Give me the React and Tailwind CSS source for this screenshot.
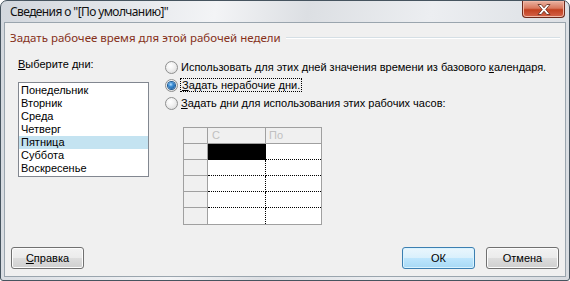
import React from "react";

const days = ["Понедельник", "Вторник", "Среда", "Четверг", "Пятница", "Суббота", "Воскресенье"];

function Radio({ checked }) {
  return (
    <span className="relative flex h-[13px] w-[13px] shrink-0 items-center justify-center rounded-full border border-[#8e8f8f] bg-[radial-gradient(circle_at_40%_35%,#ffffff_0%,#f2f2f2_40%,#d4d4d4_100%)]">
      {checked && (
        <span className="h-[7px] w-[7px] rounded-full bg-[radial-gradient(circle_at_40%_35%,#b6e0ff_0%,#3d8fd6_35%,#0f4a8a_100%)] shadow-[0_0_0_1px_#1d5a94]" />
      )}
    </span>
  );
}

function Btn({ children, primary, className = "" }) {
  return (
    <div
      className={
        "flex h-[22px] w-[73px] items-center justify-center rounded-[3px] border text-[11px] text-black " +
        (primary
          ? "border-[#3c7fb1] bg-[linear-gradient(#eaf6fd_0%,#d9f0fc_50%,#bee6fd_50%,#a7d9f5_100%)] shadow-[inset_0_0_0_1px_#d9f3ff] "
          : "border-[#707070] bg-[linear-gradient(#f2f2f2_0%,#ebebeb_50%,#dddddd_50%,#cfcfcf_100%)] shadow-[inset_0_0_0_1px_#fcfcfc] ") +
        className
      }
    >
      {children}
    </div>
  );
}

export default function App() {
  const rows = [0, 1, 2, 3, 4];
  return (
    <div className="h-[281px] w-[570px] overflow-hidden bg-white font-['Liberation_Sans',Arial,sans-serif]">
      <div className="flex h-[281px] w-[570px] flex-col rounded-t-[7px] rounded-b-[3px] border border-[#46545f] bg-[linear-gradient(100deg,#d2d7dd_0%,#e4e7eb_20%,#f3f4f6_35%,#dcdfe3_50%,#eceef1_70%,#d7dbe0_100%)]">
        {/* Title bar */}
        <div className="flex h-[21px] shrink-0 items-start justify-between">
          <div className="pl-[9px] pt-[3px] font-['Noto_Sans',sans-serif] text-[12px] leading-[16px] tracking-[-0.6px] text-[#111]">
            Сведения о "[По умолчанию]"
          </div>
          <div className="mr-[4px] flex h-[17px] w-[43px] items-center justify-center rounded-b-[4px] border border-t-0 border-[#6e2a1c] bg-[linear-gradient(#eab3a2_0%,#d9785d_45%,#c2401f_55%,#d4634a_100%)] shadow-[inset_0_0_0_1px_#f2b8a6]">
            <svg width="14" height="11" viewBox="0 0 14 11">
              <path d="M1 0.5h3.2L7 3.8 9.8 0.5H13L8.8 5.5 13 10.5H9.8L7 7.2 4.2 10.5H1L5.2 5.5z" fill="#fff" stroke="#5a2418" strokeWidth="0.8" />
            </svg>
          </div>
        </div>
        {/* Client */}
        <div className="mx-[3px] mb-[3px] flex flex-1 flex-col border border-[#9aa5ae] bg-[#f0f0f0]">
          {/* Group header */}
          <div className="mt-[7px] flex h-[15px] items-center pl-[5px] pr-[5px]">
            <span className="font-['Noto_Sans',sans-serif] text-[11.5px] leading-[15px] text-[#86301a]">
              Задать рабочее время для этой рабочей недели
            </span>
            <div className="ml-[5px] h-[2px] flex-1 border-t border-b border-t-[#d5dfe5] border-b-white" />
          </div>
          {/* Main */}
          <div className="mt-[13px] flex text-[11px] text-black">
            <div className="ml-[13px] flex w-[131px] flex-col">
              <div className="h-[13px] leading-[13px]">
                <span className="underline">В</span>ыберите дни:
              </div>
              <div className="mt-[11px] h-[95px] border border-[#828790] bg-white pt-[1px]">
                {days.map((d) => (
                  <div
                    key={d}
                    className={"h-[13px] pl-[2px] leading-[13px] " + (d === "Пятница" ? "bg-[#c4e3f1]" : "")}
                  >
                    {d}
                  </div>
                ))}
              </div>
            </div>
            <div className="ml-[16px] flex flex-col">
              <div className="flex h-[18px] items-center gap-[3px]">
                <Radio />
                <span>
                  Использовать для этих дней значения времени из базового <span className="underline">к</span>алендаря.
                </span>
              </div>
              <div className="flex h-[18px] items-center gap-[2px]">
                <Radio checked />
                <span className="border border-dotted border-black px-[1px] leading-[12px]">
                  <span className="underline">З</span>адать нерабочие дни.
                </span>
              </div>
              <div className="flex h-[18px] items-center gap-[3px]">
                <Radio />
                <span>
                  <span className="underline">З</span>адать дни для использования этих рабочих часов:
                </span>
              </div>
              {/* Table */}
              <div className="ml-[18px] mt-[15px] w-[139px] border border-[#a0a0a0] bg-white">
                <div className="flex h-[16px] border-b border-[#a0a0a0] bg-[#f0f0f0] text-[#c0c0c0]">
                  <div className="w-[24px] border-r border-[#a0a0a0]" />
                  <div className="w-[58px] border-r border-[#a0a0a0] pl-[4px] leading-[15px]">С</div>
                  <div className="flex-1 pl-[3px] leading-[15px]">По</div>
                </div>
                {rows.map((r) => (
                  <div key={r} className="flex h-[16px]">
                    <div
                      className={
                        "w-[24px] border-r border-[#a0a0a0] bg-[#f0f0f0] " + (r < 4 ? "border-b" : "")
                      }
                    />
                    <div
                      className={
                        "w-[58px] border-r border-dotted border-black " +
                        (r < 4 ? "border-b " : "") +
                        (r === 0 ? "bg-black" : "")
                      }
                    />
                    <div className={"flex-1 border-dotted border-black " + (r < 4 ? "border-b" : "")} />
                  </div>
                ))}
              </div>
            </div>
          </div>
          {/* Buttons */}
          <div className="mt-auto mb-[7px] flex items-center px-[6px]">
            <Btn>
              <span className="underline">С</span>правка
            </Btn>
            <div className="flex-1" />
            <Btn primary>ОК</Btn>
            <Btn className="ml-[11px]">Отмена</Btn>
          </div>
        </div>
      </div>
    </div>
  );
}
